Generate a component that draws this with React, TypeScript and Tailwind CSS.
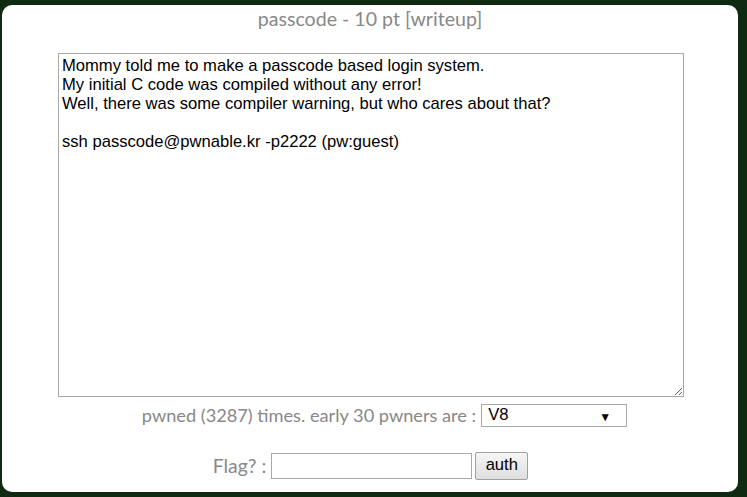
import { useState } from 'react';

const description = `Mommy told me to make a passcode based login system.
My initial C code was compiled without any error!
Well, there was some compiler warning, but who cares about that?

ssh passcode@pwnable.kr -p2222 (pw:guest)`;

const App = () => {
  const [flag, setFlag] = useState('');

  return (
    <div className="h-[497px] w-[747px] bg-[#0f2a10] pt-[5px] pl-[2px] overflow-hidden">
      <div className="flex h-[487px] w-[736px] flex-col items-center rounded-[10px] bg-white font-['Lato',sans-serif] text-[#888888]">
        {/* challenge title */}
        <div className="mt-[2px] h-[24px] text-[19.6px] leading-[24px]">passcode - 10 pt [writeup]</div>

        {/* description box */}
        <textarea
          readOnly
          value={description}
          className="mt-[22px] ml-[2px] h-[344px] w-[626px] resize border border-[#a9a9a9] px-[3px] py-[2px] font-['Liberation_Sans',Arial,sans-serif] text-[16.6px] leading-[19px] text-black outline-none"
        />

        {/* pwners row */}
        <div className="mt-[5px] ml-[29px] flex items-center gap-[5px] text-[18.2px]">
          <span>pwned (3287) times. early 30 pwners are :</span>
          <div className="relative flex h-[23px] w-[146px] items-center border border-[#a9a9a9] pl-[6px] font-['Liberation_Sans',Arial,sans-serif] text-[16.6px] text-black">
            V8
            <span className="absolute right-[15px] top-[3px] text-[12px]">▼</span>
          </div>
        </div>

        {/* flag submit row */}
        <div className="mt-[22px] ml-[1px] flex items-center text-[19.4px]">
          <span className="mr-[5px]">Flag? :</span>
          <input
            value={flag}
            onChange={(e) => setFlag(e.target.value)}
            className="h-[26px] w-[201px] border border-[#a9a9a9] px-1 text-[16px] text-black outline-none"
          />
          <button className="ml-[3px] h-[28px] w-[53px] rounded-[2px] border border-[#a0a0a0] bg-gradient-to-b from-[#f6f6f6] to-[#dedede] font-['Liberation_Sans',Arial,sans-serif] text-[16.6px] text-black">
            auth
          </button>
        </div>
      </div>
    </div>
  );
};

export default App;
